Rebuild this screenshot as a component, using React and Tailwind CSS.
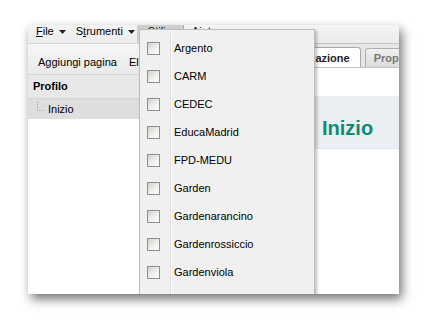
import React from 'react'

const styles = [
  'Argento',
  'CARM',
  'CEDEC',
  'EducaMadrid',
  'FPD-MEDU',
  'Garden',
  'Gardenarancino',
  'Gardenrossiccio',
  'Gardenviola',
  'Kids',
]

function Arrow() {
  return (
    <svg width="7" height="4" viewBox="0 0 7 4" className="ml-[5px] mt-[1px]">
      <path d="M0 0h7L3.5 4z" fill="#222" />
    </svg>
  )
}

function Check() {
  return (
    <div className="w-[13px] h-[13px] border border-[#8e8f8f] bg-gradient-to-br from-[#d2d2cc] via-[#ececea] to-white" />
  )
}

export default function App() {
  return (
    <div
      className="w-[425px] h-[320px] bg-white pt-[25px] pl-[28px] text-[11px] text-black"
      style={{ fontFamily: '"Liberation Sans", Arial, sans-serif' }}
    >
      <div className="relative w-[371px] h-[269px] bg-white overflow-hidden flex flex-col shadow-[3px_5px_10px_rgba(0,0,0,0.55)]">
        {/* menu bar */}
        <div className="h-[18px] shrink-0 flex items-start bg-gradient-to-b from-[#f4f4f4] to-[#ececec] leading-[13px]">
          <div className="flex items-center ml-[8px]">
            <span><span className="underline">F</span>ile</span>
            <Arrow />
          </div>
          <div className="flex items-center ml-[10px]">
            <span>S<span className="underline">t</span>rumenti</span>
            <Arrow />
          </div>
          <div className="ml-[2px] h-[18px] w-[47px] bg-[#cfcfcf] border-r border-[#a8a8a8] pl-[11px]">Stili</div>
          <div className="ml-[8px]">Aiuto</div>
        </div>

        <div className="flex flex-1 min-h-0">
          {/* left column */}
          <div className="w-[200px] shrink-0 flex flex-col border-r border-[#c8c8c8]">
            <div className="h-[32px] border-t border-[#cdcdcd] flex items-center gap-[12px] pl-[10px] pt-[6px] bg-gradient-to-b from-[#f7f7f7] to-[#e9e9e9] border-b border-[#d6d6d6]">
              <span>Aggiungi pagina</span>
              <span>Elimina</span>
            </div>
            <div className="h-[24px] flex items-center pl-[5px] font-bold bg-[#e8e8e8] border-b border-[#d4d4d4]">
              Profilo
            </div>
            <div className="h-[20px] flex items-center bg-[#dedede]">
              <div className="ml-[9px] w-[7px] h-[9px] border-l border-b border-dotted border-[#aaa] mb-[5px]" />
              <span className="ml-[4px]">Inizio</span>
            </div>
            <div className="flex-1 bg-white" />
          </div>

          {/* right column */}
          <div className="flex-1 min-w-0 flex flex-col">
            <div className="h-[25px] overflow-hidden bg-[#e6e6e6] border-t border-[#c4c4c4] border-b border-[#b4b4b4] flex items-end pl-[30px] gap-[4px]">
              <div className="shrink-0 h-[21px] -mb-px px-[10px] flex items-center bg-white border border-b-0 border-[#a9a9a9] rounded-t-[3px] font-bold text-[#222]">
                Organizzazione
              </div>
              <div className="shrink-0 h-[19px] px-[8px] flex items-center bg-gradient-to-b from-[#f0f0f0] to-[#dcdcdc] border border-b-0 border-[#b0b0b0] rounded-t-[3px] font-bold text-[#777] whitespace-nowrap">
                Proprietà
              </div>
            </div>
            <div className="h-[28px] bg-white" />
            <div className="h-[53px] bg-[#ebeef2] border-b border-[#e2e5ea] pl-[94px] pt-[20px]">
              <span className="text-[20px] font-bold text-[#0f8a74] leading-[24px]">Inizio</span>
            </div>
            <div className="flex-1 bg-white" />
          </div>
        </div>

        {/* Stili dropdown */}
        <div className="absolute left-[111px] top-[4px] w-[176px] h-[280px] bg-[#f0f0f0] border border-[#bdbdbd] shadow-[2px_2px_3px_rgba(0,0,0,0.25)] pt-[4px]">
          <div className="absolute left-[30px] top-0 bottom-0 w-[2px] border-l border-[#e0e0e0] bg-white" />
          {styles.map((s) => (
            <div key={s} className="relative h-[28px] flex items-center">
              <div className="ml-[7px]">
                <Check />
              </div>
              <span className="ml-[14px]">{s}</span>
            </div>
          ))}
        </div>
      </div>
    </div>
  )
}
